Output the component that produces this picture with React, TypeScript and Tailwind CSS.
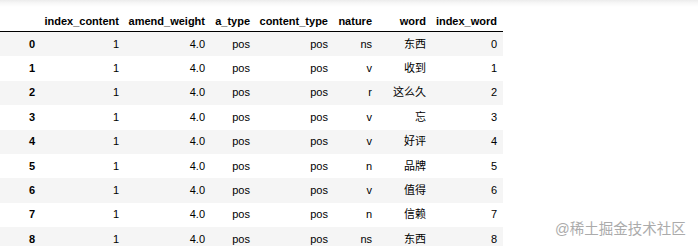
import React from "react";

const rows: [string, string, string][] = [
  ["ns", "东西", "0"],
  ["v", "收到", "1"],
  ["r", "这么久", "2"],
  ["v", "忘", "3"],
  ["v", "好评", "4"],
  ["n", "品牌", "5"],
  ["v", "值得", "6"],
  ["n", "信赖", "7"],
  ["ns", "东西", "8"],
];

const headers = ["", "index_content", "amend_weight", "a_type", "content_type", "nature", "word", "index_word"];

const grid = "grid grid-cols-[41px_84px_86px_45px_78px_44px_54px_71px] w-[503px]";

export default function App() {
  return (
    <div className="relative w-[698px] h-[246px] overflow-hidden bg-white text-black font-['Liberation_Sans','Noto_Sans_CJK_SC',sans-serif] text-[11px] leading-[13px]">
      <div className="bg-[linear-gradient(to_bottom,#ececec_0px,#f7f7f7_3px,#ffffff_7px)] w-[698px]">
        <div className={`${grid} h-[32px] border-b border-black`}>
          {headers.map((h, i) => (
            <div key={i} className="flex items-end justify-end pr-[6px] pb-[3px] font-bold whitespace-nowrap">
              {h}
            </div>
          ))}
        </div>
      </div>
      {rows.map((r, i) => (
        <div key={i} className={`${grid} h-[24.4px] ${i % 2 === 0 ? "bg-[#f5f5f5]" : "bg-white"}`}>
          <div className="flex items-center justify-end pr-[6px] font-bold">{i}</div>
          <div className="flex items-center justify-end pr-[6px]">1</div>
          <div className="flex items-center justify-end pr-[6px]">4.0</div>
          <div className="flex items-center justify-end pr-[6px]">pos</div>
          <div className="flex items-center justify-end pr-[6px]">pos</div>
          <div className="flex items-center justify-end pr-[6px]">{r[0]}</div>
          <div className="flex items-center justify-end pr-[6px]">{r[1]}</div>
          <div className="flex items-center justify-end pr-[6px]">{r[2]}</div>
        </div>
      ))}
      <div className="absolute left-[555px] top-[220px] text-[14.5px] leading-[18px] text-[#ababab] whitespace-nowrap">
        @稀土掘金技术社区
      </div>
    </div>
  );
}
